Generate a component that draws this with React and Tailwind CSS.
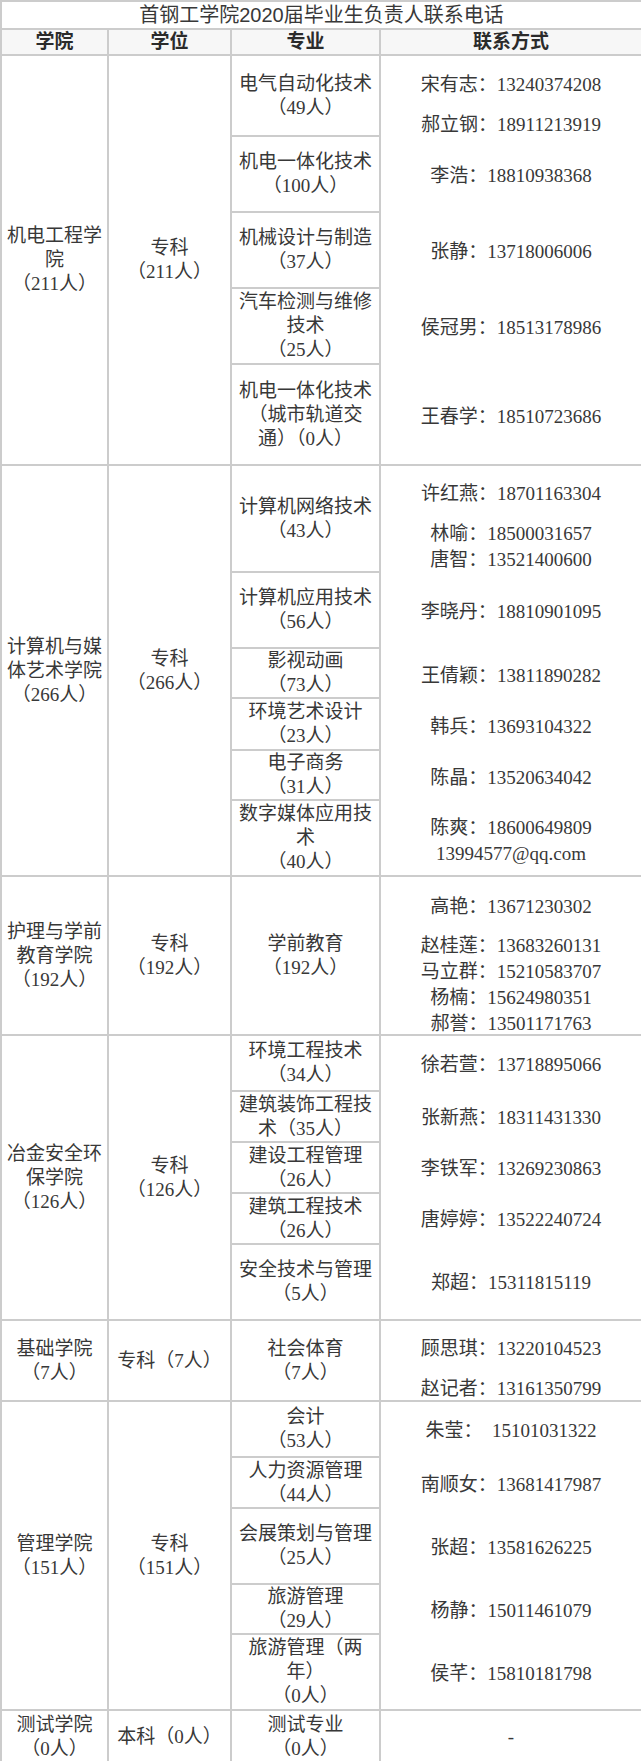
const groups = [
  {
    college: ["机电工程学院", "（211人）"],
    degree: ["专科", "（211人）"],
    majors: [
      { h: "h-[81px]", lines: ["电气自动化技术", "（49人）"] },
      { h: "h-[76px]", lines: ["机电一体化技术", "（100人）"] },
      { h: "h-[76px]", lines: ["机械设计与制造", "（37人）"] },
      { h: "h-[76px]", lines: ["汽车检测与维修技术", "（25人）"] },
      { h: "h-[101px]", lines: ["机电一体化技术（城市轨道交通）（0人）"] },
    ],
    contacts: [
      { mt: "mt-[19px]", text: "宋有志：13240374208" },
      { mt: "mt-[20px]", text: "郝立钢：18911213919" },
      { mt: "mt-[31px]", text: "李浩：18810938368" },
      { mt: "mt-[56px]", text: "张静：13718006006" },
      { mt: "mt-[56px]", text: "侯冠男：18513178986" },
      { mt: "mt-[69px]", text: "王春学：18510723686" },
    ],
  },
  {
    college: ["计算机与媒体艺术学院", "（266人）"],
    degree: ["专科", "（266人）"],
    majors: [
      { h: "h-[107px]", lines: ["计算机网络技术", "（43人）"] },
      { h: "h-[76px]", lines: ["计算机应用技术", "（56人）"] },
      { h: "h-[50px]", lines: ["影视动画", "（73人）"] },
      { h: "h-[52px]", lines: ["环境艺术设计", "（23人）"] },
      { h: "h-[50px]", lines: ["电子商务", "（31人）"] },
      { h: "h-[76px]", lines: ["数字媒体应用技术", "（40人）"] },
    ],
    contacts: [
      { mt: "mt-[18px]", text: "许红燕：18701163304" },
      { mt: "mt-[20px]", text: "林喻：18500031657" },
      { mt: "mt-[6px]", text: "唐智：13521400600" },
      { mt: "mt-[32px]", text: "李晓丹：18810901095" },
      { mt: "mt-[44px]", text: "王倩颖：13811890282" },
      { mt: "mt-[31px]", text: "韩兵：13693104322" },
      { mt: "mt-[31px]", text: "陈晶：13520634042" },
      { mt: "mt-[30px]", text: "陈爽：18600649809" },
      { mt: "mt-[6px]", text: "13994577@qq.com" },
    ],
  },
  {
    college: ["护理与学前教育学院", "（192人）"],
    degree: ["专科", "（192人）"],
    majors: [{ h: "h-[159px]", lines: ["学前教育", "（192人）"] }],
    contacts: [
      { mt: "mt-[20px]", text: "高艳：13671230302" },
      { mt: "mt-[19px]", text: "赵桂莲：13683260131" },
      { mt: "mt-[6px]", text: "马立群：15210583707" },
      { mt: "mt-[6px]", text: "杨楠：15624980351" },
      { mt: "mt-[6px]", text: "郝誉：13501171763" },
    ],
  },
  {
    college: ["冶金安全环保学院", "（126人）"],
    degree: ["专科", "（126人）"],
    majors: [
      { h: "h-[56px]", lines: ["环境工程技术", "（34人）"] },
      { h: "h-[51px]", lines: ["建筑装饰工程技术（35人）"] },
      { h: "h-[51px]", lines: ["建设工程管理", "（26人）"] },
      { h: "h-[51px]", lines: ["建筑工程技术", "（26人）"] },
      { h: "h-[76px]", lines: ["安全技术与管理", "（5人）"] },
    ],
    contacts: [
      { mt: "mt-[19px]", text: "徐若萱：13718895066" },
      { mt: "mt-[33px]", text: "张新燕：18311431330" },
      { mt: "mt-[31px]", text: "李铁军：13269230863" },
      { mt: "mt-[31px]", text: "唐婷婷：13522240724" },
      { mt: "mt-[43px]", text: "郑超：15311815119" },
    ],
  },
  {
    college: ["基础学院", "（7人）"],
    degree: ["专科（7人）"],
    majors: [{ h: "h-[81px]", lines: ["社会体育", "（7人）"] }],
    contacts: [
      { mt: "mt-[18px]", text: "顾思琪：13220104523" },
      { mt: "mt-[20px]", text: "赵记者：13161350799" },
    ],
  },
  {
    college: ["管理学院", "（151人）"],
    degree: ["专科", "（151人）"],
    majors: [
      { h: "h-[56px]", lines: ["会计", "（53人）"] },
      { h: "h-[51px]", lines: ["人力资源管理", "（44人）"] },
      { h: "h-[76px]", lines: ["会展策划与管理", "（25人）"] },
      { h: "h-[50px]", lines: ["旅游管理", "（29人）"] },
      { h: "h-[76px]", lines: ["旅游管理（两年）", "（0人）"] },
    ],
    contacts: [
      { mt: "mt-[19px]", text: "朱莹：\u00a0\u00a015101031322" },
      { mt: "mt-[34px]", text: "南顺女：13681417987" },
      { mt: "mt-[43px]", text: "张超：13581626225" },
      { mt: "mt-[43px]", text: "杨静：15011461079" },
      { mt: "mt-[43px]", text: "侯芊：15810181798" },
    ],
  },
];

const cell = "border-2 border-[#cccccc] p-0 text-center";

function Lines({ lines }) {
  return lines.map((l, i) => <div key={i}>{l}</div>);
}

export default function App() {
  return (
    <div className="h-[1761px] w-[641px] overflow-hidden bg-white">
      <table className="w-[641px] table-fixed border-collapse text-[19px] leading-[24px] text-[#383838] font-['Liberation_Serif','Noto_Sans_CJK_SC',serif]">
        <colgroup>
          <col className="w-[107px]" />
          <col className="w-[123px]" />
          <col className="w-[149px]" />
          <col className="w-[262px]" />
        </colgroup>
        <tbody>
          <tr className="h-[28px]">
            <td
              colSpan={4}
              className={`${cell} text-[20px] font-['Liberation_Sans','Noto_Sans_CJK_SC',sans-serif]`}
            >
              首钢工学院2020届毕业生负责人联系电话
            </td>
          </tr>
          <tr className="h-[26px] bg-[#f7f7f7] font-bold text-[#2b2b2b]">
            <td className={cell}>学院</td>
            <td className={cell}>学位</td>
            <td className={cell}>专业</td>
            <td className={cell}>联系方式</td>
          </tr>
          {groups.map((g, gi) =>
            g.majors.map((m, mi) => (
              <tr key={`${gi}-${mi}`} className={m.h}>
                {mi === 0 && (
                  <td rowSpan={g.majors.length} className={`${cell} px-[4px]`}>
                    <Lines lines={g.college} />
                  </td>
                )}
                {mi === 0 && (
                  <td rowSpan={g.majors.length} className={`${cell} px-[4px]`}>
                    <Lines lines={g.degree} />
                  </td>
                )}
                <td className={`${cell} px-[5px]`}>
                  <Lines lines={m.lines} />
                </td>
                {mi === 0 && (
                  <td rowSpan={g.majors.length} className={`${cell} align-top`}>
                    {g.contacts.map((c, ci) => (
                      <div key={ci} className={`h-[20px] leading-[20px] ${c.mt}`}>
                        {c.text}
                      </div>
                    ))}
                  </td>
                )}
              </tr>
            ))
          )}
          <tr className="h-[54px]">
            <td className={`${cell} px-[4px]`}>
              <div>测试学院</div>
              <div>（0人）</div>
            </td>
            <td className={`${cell} px-[4px]`}>本科（0人）</td>
            <td className={`${cell} px-[5px]`}>
              <div>测试专业</div>
              <div>（0人）</div>
            </td>
            <td className={cell}>-</td>
          </tr>
        </tbody>
      </table>
    </div>
  );
}
